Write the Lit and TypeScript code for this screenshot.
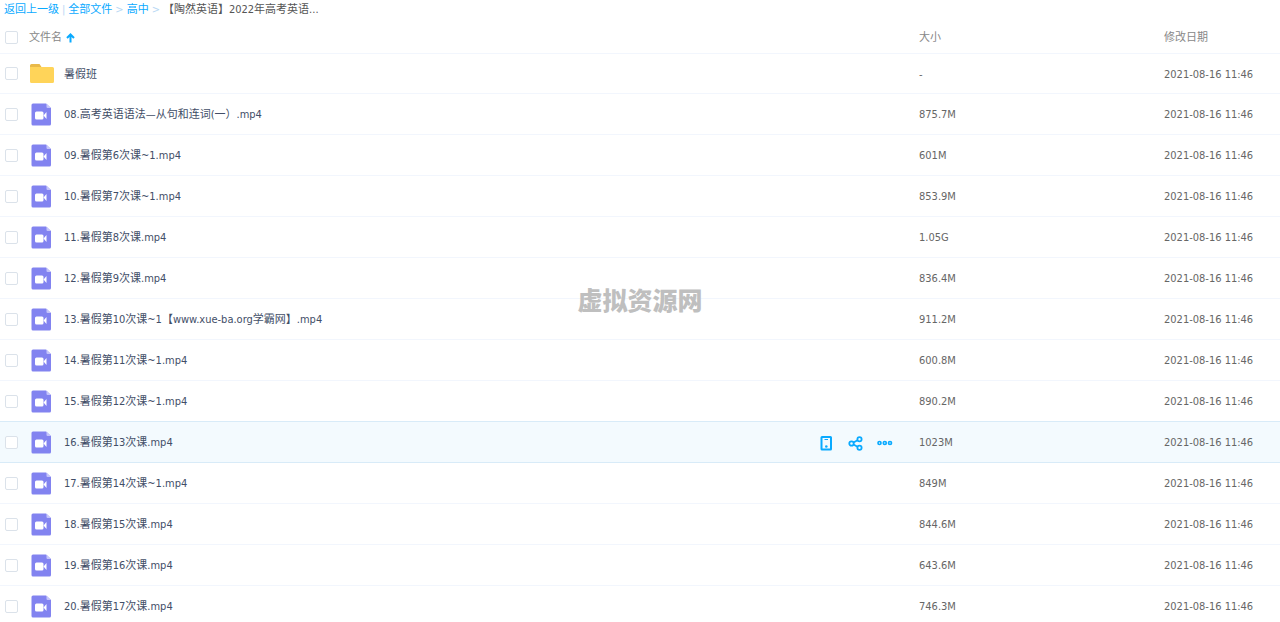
import { LitElement, html, css, svg } from "lit";
import { customElement, state } from "lit/decorators.js";
import { classMap } from "lit/directives/class-map.js";

interface Entry {
  name: string;
  size: string;
  date: string;
  folder?: boolean;
}

const DATE = "2021-08-16 11:46";

const ENTRIES: Entry[] = [
  { name: "暑假班", size: "-", date: DATE, folder: true },
  { name: "08.高考英语语法—从句和连词(一）.mp4", size: "875.7M", date: DATE },
  { name: "09.暑假第6次课~1.mp4", size: "601M", date: DATE },
  { name: "10.暑假第7次课~1.mp4", size: "853.9M", date: DATE },
  { name: "11.暑假第8次课.mp4", size: "1.05G", date: DATE },
  { name: "12.暑假第9次课.mp4", size: "836.4M", date: DATE },
  { name: "13.暑假第10次课~1【www.xue-ba.org学霸网】.mp4", size: "911.2M", date: DATE },
  { name: "14.暑假第11次课~1.mp4", size: "600.8M", date: DATE },
  { name: "15.暑假第12次课~1.mp4", size: "890.2M", date: DATE },
  { name: "16.暑假第13次课.mp4", size: "1023M", date: DATE },
  { name: "17.暑假第14次课~1.mp4", size: "849M", date: DATE },
  { name: "18.暑假第15次课.mp4", size: "844.6M", date: DATE },
  { name: "19.暑假第16次课.mp4", size: "643.6M", date: DATE },
  { name: "20.暑假第17次课.mp4", size: "746.3M", date: DATE },
];

const folderIcon = html`<svg class="icon" viewBox="0 0 26 24" aria-hidden="true">
  ${svg`<path d="M1 4V3.5A1.5 1.5 0 0 1 2.500 2H10.500L12.500 5V8H1Z" fill="#e9b949"/>
  <path d="M1 5H23.500A1.500 1.500 0 0 1 25 6.500V19.500A1.500 1.500 0 0 1 23.500 21H2.500A1.500 1.500 0 0 1 1 19.500Z" fill="#ffd459"/>`}
</svg>`;

const videoIcon = html`<svg class="icon" viewBox="0 0 26 24" aria-hidden="true">
  ${svg`<path d="M4 1.500H17L22 6V22A1.500 1.500 0 0 1 20.500 23.500H4A1.500 1.500 0 0 1 2.500 22V3A1.500 1.500 0 0 1 4 1.500Z" fill="#8283f0"/>
  <path d="M17.500 1.500L22 6H18.500A1 1 0 0 1 17.500 5Z" fill="#c5c5fa"/>
  <rect x="6" y="9.500" width="8.500" height="8" rx="1.500" fill="#fff"/>
  <path d="M14.500 13.500L17.500 10V17Z" fill="#fff"/>`}
</svg>`;

@customElement("app-root")
export class AppRoot extends LitElement {
  @state() private active = 9;

  static styles = css`
    :host {
      display: block;
      position: relative;
      height: 100vh;
      overflow: hidden;
      background: #fff;
      color: #424e67;
      font: 11px/16px "DejaVu Sans Condensed", "Noto Sans CJK SC", sans-serif;
    }
    .crumbs {
      display: flex;
      padding: 2px 4px 0;
      height: 19px;
      box-sizing: border-box;
      white-space: pre;
      color: #555;
    }
    a {
      color: #09aaff;
      text-decoration: none;
    }
    .sep {
      color: #b8d8f4;
      padding: 0 3px;
    }
    .bar {
      color: #b8d8f4;
      padding: 0 3px;
    }
    table {
      width: 100%;
      table-layout: fixed;
      border-collapse: separate;
      border-spacing: 0;
    }
    .col-size {
      width: 245px;
    }
    .col-date {
      width: 116px;
    }
    th,
    td {
      box-sizing: border-box;
      height: 41px;
      padding: 0;
      border-bottom: 1px solid #f2f6fd;
      text-align: left;
      font-weight: normal;
      white-space: nowrap;
    }
    th {
      height: 35px;
      padding-top: 3px;
      color: #888;
    }
    .folder td {
      height: 40px;
    }
    td {
      color: #666;
    }
    .text {
      padding-top: 2px;
    }
    .cell {
      display: flex;
      align-items: center;
      padding-left: 5px;
    }
    .check {
      appearance: none;
      box-sizing: border-box;
      flex: none;
      width: 13px;
      height: 13px;
      margin: 0 11px 0 0;
      border: 1px solid #dbe2ea;
      border-radius: 2px;
      background: #fff;
    }
    .check:checked {
      background: #09aaff;
    }
    .icon {
      flex: none;
      width: 26px;
      height: 24px;
      margin-right: 9px;
    }
    .name {
      flex: 1;
      padding-top: 2px;
      color: #424e67;
    }
    button {
      display: flex;
      align-items: center;
      padding: 0;
      border: 0;
      background: none;
      font: inherit;
      color: inherit;
    }
    .sort {
      gap: 4px;
    }
    .actions {
      display: flex;
      gap: 13px;
      padding: 2px 26px 0 0;
    }
    .tool {
      width: 16px;
      height: 16px;
    }
    .active td {
      background: #f3fafe;
      border-bottom-color: #d8ebf8;
    }
    .before td {
      border-bottom-color: #d8ebf8;
    }
    .mark {
      position: absolute;
      left: 0;
      right: 0;
      top: 50%;
      margin-top: -27px;
      text-align: center;
      color: #bfbfbf;
      font: 900 25px/30px "Noto Sans CJK SC", sans-serif;
      pointer-events: none;
    }
  `;

  private actions() {
    return html`<div class="actions">
      <button aria-label="发送到手机">
        <svg class="tool" viewBox="0 0 16 16" fill="none" stroke="#09aaff" stroke-width="2">
          <rect x="2.500" y="2" width="9.500" height="12.500" rx="0.500" />
          <path d="M5.500 4.500h3.500" stroke-width="1" />
          <circle cx="7.300" cy="11.500" r="1.300" fill="#09aaff" stroke="none" />
        </svg>
      </button>
      <button aria-label="分享">
        <svg class="tool" viewBox="0 0 16 16" fill="none" stroke="#09aaff" stroke-width="1.800">
          <circle cx="3.500" cy="8.500" r="2.200" />
          <circle cx="11.500" cy="4.200" r="2.100" />
          <circle cx="11.500" cy="12.700" r="2.100" />
          <path d="M5.500 7.500L9.500 5.200M5.500 9.500L9.500 11.700" />
        </svg>
      </button>
      <button aria-label="更多">
        <svg class="tool" viewBox="0 0 16 16" fill="none" stroke="#09aaff" stroke-width="1.700">
          <circle cx="2.500" cy="8" r="1.500" />
          <circle cx="7.800" cy="8" r="1.500" />
          <circle cx="13" cy="8" r="1.500" />
        </svg>
      </button>
    </div>`;
  }

  private row(entry: Entry, i: number) {
    const classes = {
      folder: !!entry.folder,
      active: i === this.active,
      before: i === this.active - 1,
    };
    return html`<tr class=${classMap(classes)} @mouseenter=${() => (this.active = i)}>
      <td>
        <div class="cell">
          <input class="check" type="checkbox" aria-label=${entry.name} />
          ${entry.folder ? folderIcon : videoIcon}
          <span class="name">${entry.name}</span>
          ${i === this.active ? this.actions() : ""}
        </div>
      </td>
      <td class="text">${entry.size}</td>
      <td class="text">${entry.date}</td>
    </tr>`;
  }

  render() {
    return html`
      <nav class="crumbs"><a href="#">返回上一级</a><span class="bar">|</span><a href="#">全部文件</a><span class="sep">&gt;</span><a href="#">高中</a><span class="sep">&gt;</span><span>【陶然英语】2022年高考英语...</span></nav>
      <table>
        <colgroup>
          <col />
          <col class="col-size" />
          <col class="col-date" />
        </colgroup>
        <thead>
          <tr>
            <th>
              <div class="cell">
                <input class="check" type="checkbox" aria-label="全选" />
                <button class="sort">
                  文件名
                  <svg width="9" height="10" viewBox="0 0 9 10" fill="none" stroke="#09aaff" stroke-width="2" aria-hidden="true">
                    <path d="M4.500 9.500V2M1 5L4.500 1.500L8 5" />
                  </svg>
                </button>
              </div>
            </th>
            <th>大小</th>
            <th>修改日期</th>
          </tr>
        </thead>
        <tbody>
          ${ENTRIES.map((e, i) => this.row(e, i))}
        </tbody>
      </table>
      <div class="mark">虚拟资源网</div>
    `;
  }
}
